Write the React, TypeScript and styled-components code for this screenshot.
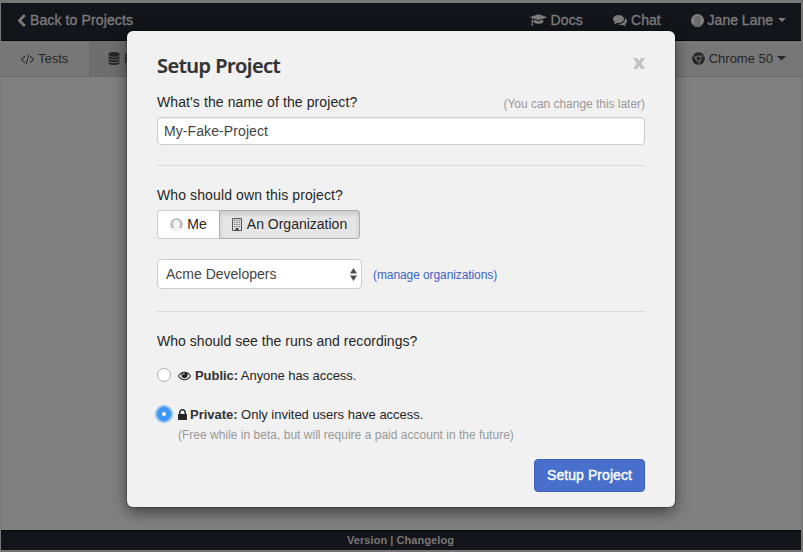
import React from "react";
import styled, { createGlobalStyle } from "styled-components";
import { FaChrome } from "react-icons/fa";

const GlobalStyle = createGlobalStyle`
  * { box-sizing: border-box; }
  body { margin: 0; overflow: hidden; }
  button, input, select { font: inherit; }
`;

const sans = `"Liberation Sans", Arial, sans-serif`;

const Page = styled.div`
  display: flex;
  flex-direction: column;
  position: relative;
  width: 803px;
  height: 552px;
  border: 1px solid #777779;
  border-width: 3px 2px 2px 1px;
  border-color: #757779 #777 #777476 #777;
  background: #808080;
  font-family: ${sans};
`;

const TopBar = styled.header`
  display: flex;
  align-items: center;
  height: 38px;
  flex: none;
  padding: 0 15px 3px 16px;
  background: #14151b;
  border-bottom: 1px solid #08090c;
  color: #7b7b7c;
  font-size: 14px;
  -webkit-text-stroke: 0.35px currentColor;
`;

const SubBar = styled.nav`
  display: flex;
  height: 36px;
  flex: none;
  background: #777;
  border-bottom: 1px solid #686868;
  color: #262626;
  font-size: 13px;
`;

const Item = styled.div<{ $gap: number; $after?: number }>`
  display: flex;
  align-items: center;
  gap: ${(p) => p.$gap}px;
  margin-right: ${(p) => p.$after ?? 0}px;
`;

const Push = styled.div`
  flex: 1;
`;

const Tab = styled.div<{ $active?: boolean; $width: number; $pad: number }>`
  display: flex;
  align-items: center;
  gap: 4px;
  width: ${(p) => p.$width}px;
  padding-left: ${(p) => p.$pad}px;
  background: ${(p) => (p.$active ? "#6e6e6e" : "transparent")};
`;

const Label = styled.span<{ $spacing?: number }>`
  white-space: nowrap;
  letter-spacing: ${(p) => p.$spacing ?? 0}px;
`;

const Footer = styled.footer`
  display: flex;
  align-items: center;
  justify-content: center;
  height: 20px;
  margin-top: auto;
  padding: 0 1px 2px 0;
  background: #14151b;
  border-top: 1px solid #08090c;
  color: #777;
  font-size: 11px;
  font-weight: 700;
`;

const Dialog = styled.section`
  position: absolute;
  left: 126px;
  top: 28px;
  width: 548px;
  height: 476px;
  padding: 20px 30px 15px;
  display: flex;
  flex-direction: column;
  border-radius: 6px;
  background: #f1f1f1;
  box-shadow: 0 0 0 1px rgba(0, 0, 0, 0.2), 0 5px 15px rgba(0, 0, 0, 0.5);
  color: #262626;
  font-size: 14px;
`;

const DialogHead = styled.div`
  display: flex;
  justify-content: space-between;
  height: 40px;
`;

const Title = styled.h4`
  margin: 0;
  font: 600 20px/30px "Noto Sans", sans-serif;
  letter-spacing: -0.5px;
  color: #333;
  -webkit-text-stroke: 0.2px #333;
`;

const Close = styled.button`
  padding: 0;
  border: 0;
  background: none;
  height: 22px;
  font: 800 20px/20px "Noto Sans", sans-serif;
  color: #c1c1c1;
`;

const Row = styled.div<{ $height: number }>`
  display: flex;
  align-items: center;
  justify-content: space-between;
  height: ${(p) => p.$height}px;
`;

const Question = styled.label<{ $spacing?: number }>`
  line-height: 22px;
  white-space: nowrap;
  letter-spacing: ${(p) => p.$spacing ?? 0}px;
`;

const Hint = styled.span`
  color: #999;
  font-size: 12px;
  line-height: 18px;
  padding-top: 3px;
  white-space: nowrap;
  letter-spacing: -0.03px;
`;

const NameInput = styled.input`
  width: 100%;
  height: 28px;
  margin-top: 4px;
  flex: none;
  padding: 0 6px;
  border: 1px solid #ccc;
  border-radius: 4px;
  background: #fff;
  box-shadow: inset 0 1px 1px rgba(0, 0, 0, 0.075);
  color: #444;
  font-family: ${sans};
  letter-spacing: 0.09px;
`;

const Divider = styled.hr`
  width: 100%;
  margin: 20px 0 18px;
  border: 0;
  flex: none;
  border-top: 1px solid #d9d9d9;
`;

const Toggle = styled.div`
  display: flex;
  margin-top: 4px;
`;

const ToggleButton = styled.button<{ $pressed?: boolean; $width: number }>`
  display: flex;
  align-items: center;
  justify-content: center;
  gap: ${(p) => (p.$pressed ? 5 : 4)}px;
  width: ${(p) => p.$width}px;
  height: 29px;
  padding: 0 0 1px;
  color: #262626;
  border: 1px solid ${(p) => (p.$pressed ? "#adadad" : "#ccc")};
  border-right-width: ${(p) => (p.$pressed ? 1 : 0)}px;
  border-radius: ${(p) => (p.$pressed ? "0 3px 3px 0" : "3px 0 0 3px")};
  background: ${(p) => (p.$pressed ? "#e6e6e6" : "#fff")};
  box-shadow: ${(p) => (p.$pressed ? "inset 0 3px 5px rgba(0, 0, 0, 0.125)" : "none")};
`;

const OwnerRow = styled.div`
  display: flex;
  align-items: center;
  gap: 11px;
  margin: 20px 0 2px;
`;

const Picker = styled.div`
  display: flex;
  align-items: center;
  justify-content: space-between;
  width: 205px;
  height: 30px;
  padding: 0 4px 0 8px;
  border: 1px solid #ccc;
  border-radius: 4px;
  background: #fff;
  color: #444;
`;

const ManageLink = styled.a`
  color: #3d65c4;
  font-size: 12px;
  padding-top: 2px;
  letter-spacing: -0.09px;
`;

const Option = styled.label<{ $top: number }>`
  display: flex;
  align-items: center;
  height: 18px;
  margin-top: ${(p) => p.$top}px;
  font-size: 13px;
`;

const Radio = styled.span<{ $on?: boolean }>`
  display: flex;
  align-items: center;
  justify-content: center;
  width: 14px;
  height: 14px;
  margin-right: 7px;
  border-radius: 50%;
  border: 1px solid ${(p) => (p.$on ? "#3d94f6" : "#b0b0b0")};
  background: ${(p) => (p.$on ? "#3c98fb" : "#fff")};
  box-shadow: ${(p) => (p.$on ? "0 0 0 2px #91c0f5" : "none")};
  &::after {
    content: "";
    width: 4px;
    height: 4px;
    border-radius: 50%;
    background: #fff;
  }
`;

const OptionText = styled.span<{ $left: number; $spacing?: number }>`
  margin-left: ${(p) => p.$left}px;
  white-space: nowrap;
  letter-spacing: ${(p) => p.$spacing ?? 0}px;
  b { color: #333; }
`;

const Note = styled.div`
  margin: 4px 0 0 21px;
  color: #999;
  font-size: 12px;
  line-height: 16px;
  white-space: nowrap;
  letter-spacing: 0.015px;
`;

const Submit = styled.button`
  align-self: flex-end;
  width: 111px;
  height: 33px;
  margin-top: auto;
  padding: 0 0 2px;
  border: 1px solid #3b62bd;
  border-radius: 4px;
  background: #486fcb;
  color: #fff;
  font-size: 14px;
  letter-spacing: 0.06px;
  -webkit-text-stroke: 0.4px #fff;
`;

const Svg = styled.svg`
  display: block;
  flex: none;
  fill: currentColor;
`;

const paths = {
  chevron:
    "M1427 301l-531 531 531 531q19 19 19 45t-19 45l-166 166q-19 19-45 19t-45-19l-742-742q-19-19-19-45t19-45l742-742q19-19 45-19t45 19l166 166q19 19 19 45t-19 45z",
  code: "M553 1399l-50 50q-10 10-23 10t-23-10l-466-466q-10-10-10-23t10-23l466-466q10-10 23-10t23 10l50 50q10 10 10 23t-10 23l-393 393 393 393q10 10 10 23t-10 23zm591-1067l-373 1291q-4 13-15.5 19.5t-23.5 2.5l-62-17q-13-4-19.5-15.5t-2.5-24.5l373-1291q4-13 15.5-19.5t23.5-2.5l62 17q13 4 19.5 15.5t2.5 24.5zm657 651l-466 466q-10 10-23 10t-23-10l-50-50q-10-10-10-23t10-23l393-393-393-393q-10-10-10-23t10-23l50-50q10-10 23-10t23 10l466 466q10 10 10 23t-10 23z",
  database:
    "M896 768q237 0 443-43t325-127v170q0 69-103 128t-280 93.5-385 34.5-385-34.5-280-93.5-103-128v-170q119 84 325 127t443 43zm0 768q237 0 443-43t325-127v170q0 69-103 128t-280 93.5-385 34.5-385-34.5-280-93.5-103-128v-170q119 84 325 127t443 43zm0-384q237 0 443-43t325-127v170q0 69-103 128t-280 93.5-385 34.5-385-34.5-280-93.5-103-128v-170q119 84 325 127t443 43zm0-1152q208 0 385 34.5t280 93.5 103 128v128q0 69-103 128t-280 93.5-385 34.5-385-34.5-280-93.5-103-128v-128q0-69 103-128t280-93.5 385-34.5z",
  cap: "M1774 836l18 316q4 69-82 128t-235 93.5-323 34.5-323-34.5-235-93.5-82-128l18-316 574 181q22 7 48 7t48-7zm530-324q0 23-22 31l-1120 352q-4 1-10 1t-10-1l-652-206q-43 34-71 111.5t-34 178.5q63 36 63 109 0 69-58 107l58 433q2 14-8 25-9 11-24 11h-192q-15 0-24-11-10-11-8-25l58-433q-58-38-58-107 0-73 65-111 11-207 98-330l-333-104q-22-8-22-31t22-31l1120-352q4-1 10-1t10 1l1120 352q22 8 22 31z",
  comments:
    "M1408 768q0 139-94 257t-256.5 186.5-353.5 68.5q-86 0-176-16-124 88-278 128-36 9-86 16h-3q-11 0-20.5-8t-11.5-21q-1-3-1-6.5t.5-6.5 2-6l2.5-5 3.5-5.5 4-5 4.5-5 4-4.5q5-6 23-25t26-29.5 22.5-29 25-38.5 20.5-44q-124-72-195-177t-71-224q0-139 94-257t256.5-186.5 353.5-68.5 353.5 68.5 256.5 186.5 94 257zm384 256q0 120-71 224.5t-195 176.5q10 24 20.5 44t25 38.5 22.5 29 26 29.5 23 25q1 1 4 4.5t4.5 5 4 5 3.5 5.5l2.5 5 2 6 .5 6.5-1 6.5q-3 14-13 22t-22 7q-50-7-86-16-154-40-278-128-90 16-176 16-271 0-472-132 58 4 88 4 161 0 309-45t264-129q125-92 192-212t67-254q0-77-23-152 129 71 204 178t75 230z",
  eye: "M1664 960q-152-236-381-353 61 104 61 225 0 185-131.5 316.5t-316.5 131.5-316.5-131.5-131.5-316.5q0-121 61-225-229 117-381 353 133 205 333.5 326.5t434.5 121.5 434.5-121.5 333.5-326.5zm-720-384q0-20-14-34t-34-14q-125 0-214.5 89.5t-89.5 214.5q0 20 14 34t34 14 34-14 14-34q0-86 61-147t147-61q20 0 34-14t14-34zm848 384q0 34-20 69-140 230-376.5 368.5t-499.5 138.5-499.5-139-376.5-368q-20-35-20-69t20-69q140-229 376.5-368t499.5-139 499.5 139 376.5 368q20 35 20 69z",
  lock: "M640 768h512v-192q0-106-75-181t-181-75-181 75-75 181v192zm832 96v576q0 40-28 68t-68 28h-960q-40 0-68-28t-28-68v-576q0-40 28-68t68-28h32v-192q0-184 132-316t316-132 316 132 132 316v192h32q40 0 68 28t28 68z",
};

type IconProps = { name: keyof typeof paths; w: number; h: number; box?: string };

const Icon = ({ name, w, h, box = "0 0 1792 1792" }: IconProps) => (
  <Svg width={w} height={h} viewBox={box}>
    <path d={paths[name]} />
  </Svg>
);

const Caret = ({ w }: { w: number }) => (
  <Svg width={w} height={w / 2} viewBox="0 0 8 4">
    <path d="M0 0h8L4 4z" />
  </Svg>
);

const Avatar = ({ disc, figure }: { disc: string; figure: string }) => (
  <Svg width={13} height={13} viewBox="0 0 13 13">
    <clipPath id={`disc-${disc.slice(1)}`}>
      <circle cx="6.5" cy="6.5" r="6.5" />
    </clipPath>
    <g clipPath={`url(#disc-${disc.slice(1)})`}>
      <rect width="13" height="13" fill={disc} />
      <ellipse cx="6.5" cy="6" rx="3.3" ry="3.9" fill={figure} />
      <path d="M4.500 8h4v1.600l3 1.200V13h-10v-2.200l3-1.200z" fill={figure} />
    </g>
  </Svg>
);

const Building = () => (
  <Svg width={10} height={13} viewBox="0 0 10 13">
    <path d="M.5.5h9v12h-9z" fill="#dcdcdc" stroke="#555" />
    <path
      d="M2.500 2v7M4.200 2v7M5.900 2v7M7.600 2v7"
      stroke="#777"
      strokeWidth="1"
      strokeDasharray="1 1"
    />
    <path d="M3.500 10h3v2.500h-3z" fill="#444" />
  </Svg>
);

const Arrows = () => (
  <Svg width={7} height={13} viewBox="0 0 7 13">
    <path d="M3.500 0L7 5.500H0zM0 7.500h7L3.500 13z" fill="#4d4d4d" />
  </Svg>
);

export default function App() {
  return (
    <>
      <GlobalStyle />
      <Page>
        <TopBar>
          <Item $gap={4}>
            <Icon name="chevron" w={9} h={13} box="360 0 1100 1664" />
            <Label $spacing={0.12}>Back to Projects</Label>
          </Item>
          <Push />
          <Item $gap={4} $after={30}>
            <Icon name="cap" w={17} h={14} box="0 0 2304 1792" />
            <Label $spacing={0.15}>Docs</Label>
          </Item>
          <Item $gap={4} $after={30}>
            <Icon name="comments" w={14} h={14} />
            <Label>Chat</Label>
          </Item>
          <Item $gap={4}>
            <Avatar disc="#808080" figure="#6b6b6b" />
            <Item $gap={5}>
              <Label>Jane Lane</Label>
              <Caret w={8} />
            </Item>
          </Item>
        </TopBar>
        <SubBar>
          <Tab $width={88} $pad={20}>
            <Icon name="code" w={13} h={14} box="-20 0 1832 1792" />
            <Label>Tests</Label>
          </Tab>
          <Tab $active $width={90} $pad={19}>
            <Icon name="database" w={12} h={13} box="128 0 1536 1792" />
            <Label>Runs</Label>
          </Tab>
          <Push />
          <Item $gap={4} $after={15}>
            <FaChrome size={13} />
            <Label>Chrome 50</Label>
            <Caret w={9} />
          </Item>
        </SubBar>
        <Footer>
          <Label $spacing={0.06}>Version | Changelog</Label>
        </Footer>

        <Dialog>
          <DialogHead>
            <Title>Setup Project</Title>
            <Close>x</Close>
          </DialogHead>
          <Row $height={22}>
            <Question $spacing={0.1}>What's the name of the project?</Question>
            <Hint>(You can change this later)</Hint>
          </Row>
          <NameInput defaultValue="My-Fake-Project" />
          <Divider />
          <Question $spacing={0.11}>Who should own this project?</Question>
          <Toggle>
            <ToggleButton $width={62}>
              <Avatar disc="#c2c2c2" figure="#f4f4f4" />
              <Label>Me</Label>
            </ToggleButton>
            <ToggleButton $pressed $width={141}>
              <Building />
              <Label>An Organization</Label>
            </ToggleButton>
          </Toggle>
          <OwnerRow>
            <Picker>
              <Label>Acme Developers</Label>
              <Arrows />
            </Picker>
            <ManageLink>(manage organizations)</ManageLink>
          </OwnerRow>
          <Divider />
          <Question $spacing={0.03}>Who should see the runs and recordings?</Question>
          <Option $top={14}>
            <Radio />
            <Icon name="eye" w={13} h={13} />
            <OptionText $left={4} $spacing={-0.05}>
              <b>Public:</b> Anyone has access.
            </OptionText>
          </Option>
          <Option $top={21}>
            <Radio $on />
            <Icon name="lock" w={9} h={13} box="320 0 1152 1664" />
            <OptionText $left={3} $spacing={-0.02}>
              <b>Private:</b> Only invited users have access.
            </OptionText>
          </Option>
          <Note>(Free while in beta, but will require a paid account in the future)</Note>
          <Submit>Setup Project</Submit>
        </Dialog>
      </Page>
    </>
  );
}
